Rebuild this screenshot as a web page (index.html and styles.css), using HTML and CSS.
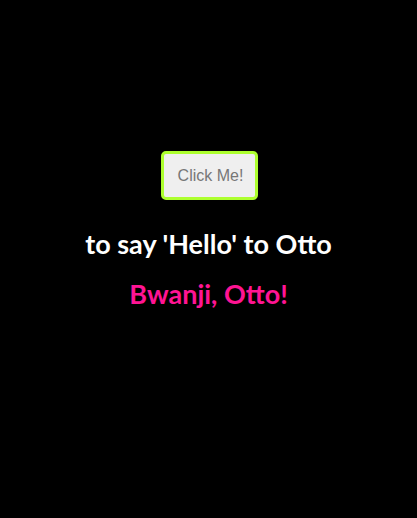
FILE: index.html
```html
<!DOCTYPE html>
<html>
<head>
<meta charset="utf-8">
<link rel="stylesheet" href="styles.css">
</head>
<body>
<main class="app">
  <button class="btn">Click Me!</button>
  <p class="say">to say 'Hello' to Otto</p>
  <p class="greet">Bwanji, Otto!</p>
</main>
</body>
</html>
```
FILE: styles.css
```css
html, body {
  margin: 0;
  background: #000;
  height: 100%;
}
.app {
  display: flex;
  flex-direction: column;
  align-items: center;
  padding-top: 151px;
  font-family: Lato, sans-serif;
}
.btn {
  box-sizing: border-box;
  width: 97px;
  height: 49px;
  margin-left: 2px;
  padding: 1px 0 0 2px;
  background: #efefef;
  border: 3px solid #adff2f;
  border-radius: 5px;
  color: #777;
  font-family: "Liberation Sans", Arial, sans-serif;
  font-size: 16px;
}
.say {
  margin: 28px 0 0;
  color: #fff;
  font-weight: bold;
  font-size: 27px;
  line-height: 32px;
}
.greet {
  margin: 18px 0 0;
  color: #ff1493;
  font-weight: bold;
  font-size: 27px;
  line-height: 32px;
}
```
